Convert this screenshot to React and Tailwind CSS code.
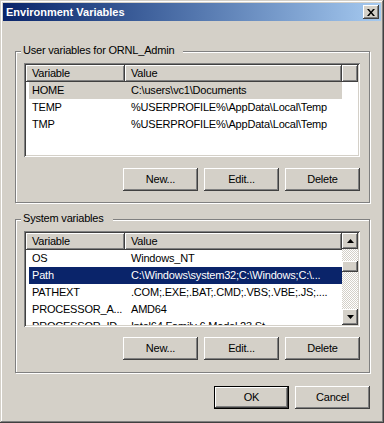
import React from "react";

const raised =
  "shadow-[inset_-1px_-1px_0_#404040,inset_1px_1px_0_#ffffff,inset_-2px_-2px_0_#808080,inset_2px_2px_0_#d4d0c8]";
const headerRaised =
  "shadow-[inset_-1px_-1px_0_#404040,inset_1px_1px_0_#ffffff,inset_-2px_-2px_0_#808080]";
const sunken =
  "shadow-[inset_1px_1px_0_#808080,inset_-1px_-1px_0_#ffffff,inset_2px_2px_0_#404040,inset_-2px_-2px_0_#d4d0c8]";

function Button({ children }) {
  return (
    <div className={`flex h-[23px] w-[75px] items-center justify-center bg-[#d4d0c8] ${raised}`}>
      {children}
    </div>
  );
}

function DefaultButton({ children }) {
  return (
    <div className="h-[23px] w-[75px] border border-black">
      <div className={`flex h-full w-full items-center justify-center bg-[#d4d0c8] ${raised}`}>
        {children}
      </div>
    </div>
  );
}

function HeaderCell({ children, className }) {
  return (
    <div className={`h-[17px] bg-[#d4d0c8] pl-[6px] leading-[17px] whitespace-nowrap ${headerRaised} ${className}`}>
      {children}
    </div>
  );
}

function Row({ name, value, sel }) {
  const cls =
    sel === "gray" ? "bg-[#d4d0c8]" : sel === "blue" ? "bg-[#0a246a] text-white" : "";
  return (
    <div className={`ml-[3px] flex h-[17px] w-[313px] shrink-0 leading-[17px] whitespace-nowrap ${cls}`}>
      <div className="w-[96px] shrink-0 overflow-hidden pl-[3px]">{name}</div>
      <div className="min-w-0 flex-1 overflow-hidden pl-[6px]">{value}</div>
    </div>
  );
}

function GroupBox({ label, children, className }) {
  return (
    <div
      className={`relative border border-[#808080] shadow-[inset_1px_1px_0_#ffffff,1px_1px_0_#ffffff] ${className}`}
    >
      <div className="absolute left-[5px] top-[-8px] bg-[#d4d0c8] pl-[2px] pr-[9px] leading-[13px] whitespace-nowrap">
        {label}
      </div>
      {children}
    </div>
  );
}

function Arrow({ up }) {
  return (
    <svg width="7" height="4" viewBox="0 0 7 4">
      {up ? (
        <polygon points="3.5,0 7,4 0,4" fill="#000" />
      ) : (
        <polygon points="0,0 7,0 3.5,4" fill="#000" />
      )}
    </svg>
  );
}

function ScrollButton({ up }) {
  return (
    <div className={`flex h-[16px] w-[16px] shrink-0 items-center justify-center bg-[#d4d0c8] ${raised}`}>
      <Arrow up={up} />
    </div>
  );
}

function Buttons() {
  return (
    <div className="mt-[11px] flex justify-end gap-[6px]">
      <Button>New...</Button>
      <Button>Edit...</Button>
      <Button>Delete</Button>
    </div>
  );
}

export default function App() {
  return (
    <div
      className={`flex h-[423px] w-[384px] flex-col bg-[#d4d0c8] p-[3px] font-['Liberation_Sans',Arial,sans-serif] text-[11px] tracking-[-0.2px] text-black shadow-[inset_-1px_-1px_0_#404040,inset_1px_1px_0_#d4d0c8,inset_-2px_-2px_0_#808080,inset_2px_2px_0_#ffffff]`}
    >
      {/* Title bar */}
      <div className="flex h-[18px] shrink-0 items-center justify-between bg-linear-to-r from-[#0a246a] to-[#a6caf0] pl-[3px] pr-[2px]">
        <span className="text-[11px] font-bold leading-[18px] tracking-normal text-white">
          Environment Variables
        </span>
        <div className={`flex h-[14px] w-[16px] items-center justify-center bg-[#d4d0c8] ${raised}`}>
          <svg width="8" height="7" viewBox="0 0 8 7">
            <path d="M0 0h2l2 2.5L6 0h2L5 3.5 8 7H6L4 4.5 2 7H0l3-3.5z" fill="#000" />
          </svg>
        </div>
      </div>

      <div className="flex flex-1 flex-col pl-[12px] pr-[11px]">
        {/* User variables */}
        <GroupBox label="User variables for ORNL_Admin" className="mt-[30px] pb-[11px] pl-[8px] pr-[9px] pt-[11px]">
          <div className={`h-[94px] w-full overflow-hidden bg-white p-[2px] ${sunken}`}>
            <div className="flex h-[17px]">
              <HeaderCell className="w-[99px] shrink-0">Variable</HeaderCell>
              <HeaderCell className="w-[217px] shrink-0">Value</HeaderCell>
              <HeaderCell className="flex-1"></HeaderCell>
            </div>
            <Row name="HOME" value="C:\users\vc1\Documents" sel="gray" />
            <Row name="TEMP" value="%USERPROFILE%\AppData\Local\Temp" />
            <Row name="TMP" value="%USERPROFILE%\AppData\Local\Temp" />
          </div>
          <Buttons />
        </GroupBox>

        {/* System variables */}
        <GroupBox label="System variables" className="mt-[16px] pb-[12px] pl-[8px] pr-[9px] pt-[11px]">
          <div className={`flex h-[96px] w-full bg-white p-[2px] ${sunken}`}>
            <div className="flex w-[316px] flex-col overflow-hidden">
              <div className="flex h-[17px] shrink-0">
                <HeaderCell className="w-[99px] shrink-0">Variable</HeaderCell>
                <HeaderCell className="flex-1">Value</HeaderCell>
              </div>
              <Row name="OS" value="Windows_NT" />
              <Row name="Path" value="C:\Windows\system32;C:\Windows;C:\..." sel="blue" />
              <Row name="PATHEXT" value=".COM;.EXE;.BAT;.CMD;.VBS;.VBE;.JS;...." />
              <Row name="PROCESSOR_A..." value="AMD64" />
              <Row name="PROCESSOR_ID..." value="Intel64 Family 6 Model 23 St..." />
            </div>
            <div className="flex w-[16px] flex-col">
              <ScrollButton up />
              <div className="flex flex-1 flex-col bg-[image:repeating-conic-gradient(#d4d0c8_0%_25%,#ffffff_0%_50%)] bg-[length:2px_2px]">
                <div className={`mt-[12px] h-[11px] w-[16px] bg-[#d4d0c8] ${raised}`}></div>
              </div>
              <ScrollButton />
            </div>
          </div>
          <div className="mt-[10px] flex justify-end gap-[6px]">
            <Button>New...</Button>
            <Button>Edit...</Button>
            <Button>Delete</Button>
          </div>
        </GroupBox>

        <div className="mt-[13px] flex justify-end gap-[6px]">
          <DefaultButton>OK</DefaultButton>
          <Button>Cancel</Button>
        </div>
      </div>
    </div>
  );
}
